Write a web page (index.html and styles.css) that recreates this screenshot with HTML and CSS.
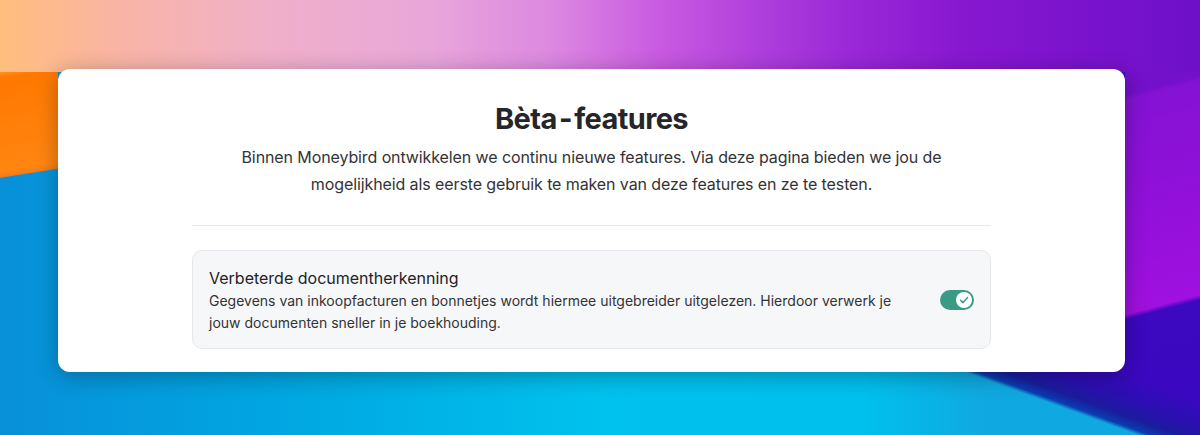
FILE: index.html
```html
<!DOCTYPE html>
<html lang="nl">
<head>
    <meta charset="UTF-8">
    <meta name="viewport" content="width=device-width, initial-scale=1.0">
    <title>Bèta-features - Moneybird</title>
    <link rel="stylesheet" href="styles.css">
</head>
<body>
    <div class="card">
        <h1>Bèta - features</h1>
        <p class="intro">Binnen Moneybird ontwikkelen we continu nieuwe features. Via deze pagina bieden we jou de mogelijkheid als eerste gebruik te maken van deze features en ze te testen.</p>
        <hr class="divider">
        <div class="feature">
            <div class="feature-text">
                <div class="feature-title">Verbeterde documentherkenning</div>
                <div class="feature-desc">Gegevens van inkoopfacturen en bonnetjes wordt hiermee uitgebreider uitgelezen. Hierdoor verwerk je jouw documenten sneller in je boekhouding.</div>
            </div>
            <label class="toggle">
                <span class="knob">
                    <svg width="12" height="12" viewBox="0 0 12 12"><path d="M2.5 6.2 L5 8.6 L9.6 3.6" fill="none" stroke="#3a9a84" stroke-width="1.5" stroke-linecap="round" stroke-linejoin="round"/></svg>
                </span>
            </label>
        </div>
    </div>
</body>
</html>
```

FILE: styles.css
```css
html, body {
    height: 100%;
}
body {
    margin: 0;
    padding: 69px 75px 0 58px;
    box-sizing: border-box;
    font-family: 'Inter', 'Noto Sans', sans-serif;
    color: #2b2b2e;
    overflow: hidden;
    background-color: #0a98dc;
    /* wallpaper: top band, left strip, right strip, bottom wedge, blue base */
    background-image:
        linear-gradient(90deg, #ffbd7c 0%, #f9b4a6 10%, #f0b0c8 22%, #e8a6da 36%, #dc88e0 46%, #c85ae0 55%, #b040dc 63%, #9a28d8 71%, #8818d0 80%, #7812cc 92%, #6e10c8 100%),
        linear-gradient(171deg, #ff9a3c 0px, #ff7800 8px, #ff8612 100px, #f57a18 106px, transparent 107px),
        linear-gradient(165deg, #7010c8 0px, #7410cc 92px, #8412d4 97px, #9810dc 250px, #a010e0 304px, #3c08c0 309px, #3a08c0 440px),
        linear-gradient(20deg, rgba(0, 0, 0, 0) 47.5%, #0a3cb0 48%, #1a1c9c 49.2%, #2a10b0 51%, #3a08c0 54%, #3a08c0 100%),
        linear-gradient(90deg, #0890d8 0%, #00a8e2 25%, #00c2ee 50%, #00c0ee 72%, #10a8e0 82%);
    background-size: 100% 72px, 58px 300px, 75px 372px, 100% 100%, 100% 100%;
    background-position: 0 0, 0 70px, 100% 0, 0 0, 0 0;
    background-repeat: no-repeat;
}
.card {
    background: #ffffff;
    border-radius: 12px;
    box-shadow: 0 4px 22px rgba(0, 0, 0, 0.3);
    height: 303px;
    box-sizing: border-box;
    padding: 32px 134px 0 134px;
    text-align: center;
}
h1 {
    margin: 0;
    font-size: 29px;
    font-weight: 700;
    line-height: 36px;
    letter-spacing: -0.6px;
    word-spacing: -4px;
    color: #262629;
}
.intro {
    max-width: 715px;
    margin: 7px auto 0;
    font-size: 16px;
    line-height: 27px;
    letter-spacing: -0.1px;
    color: #333336;
}
.divider {
    border: none;
    border-top: 1px solid #e8e9ee;
    margin: 27px 0 24px;
}
.feature {
    display: flex;
    align-items: center;
    gap: 40px;
    text-align: left;
    background: #f6f7f9;
    border: 1px solid #e6e7ec;
    border-radius: 10px;
    padding: 15px 16px 14px 16px;
}
.feature-text {
    flex: 1;
}
.feature-title {
    font-size: 16px;
    font-weight: 400;
    line-height: 24px;
    color: #232326;
}
.feature-desc {
    font-size: 14px;
    line-height: 22px;
    color: #333336;
}
.toggle {
    width: 34px;
    height: 20px;
    border-radius: 10px;
    background: #3a9a84;
    display: flex;
    align-items: center;
    justify-content: flex-end;
    padding: 2px;
    box-sizing: border-box;
    flex-shrink: 0;
}
.knob {
    width: 16px;
    height: 16px;
    border-radius: 50%;
    background: #ffffff;
    display: flex;
    align-items: center;
    justify-content: center;
}
```
